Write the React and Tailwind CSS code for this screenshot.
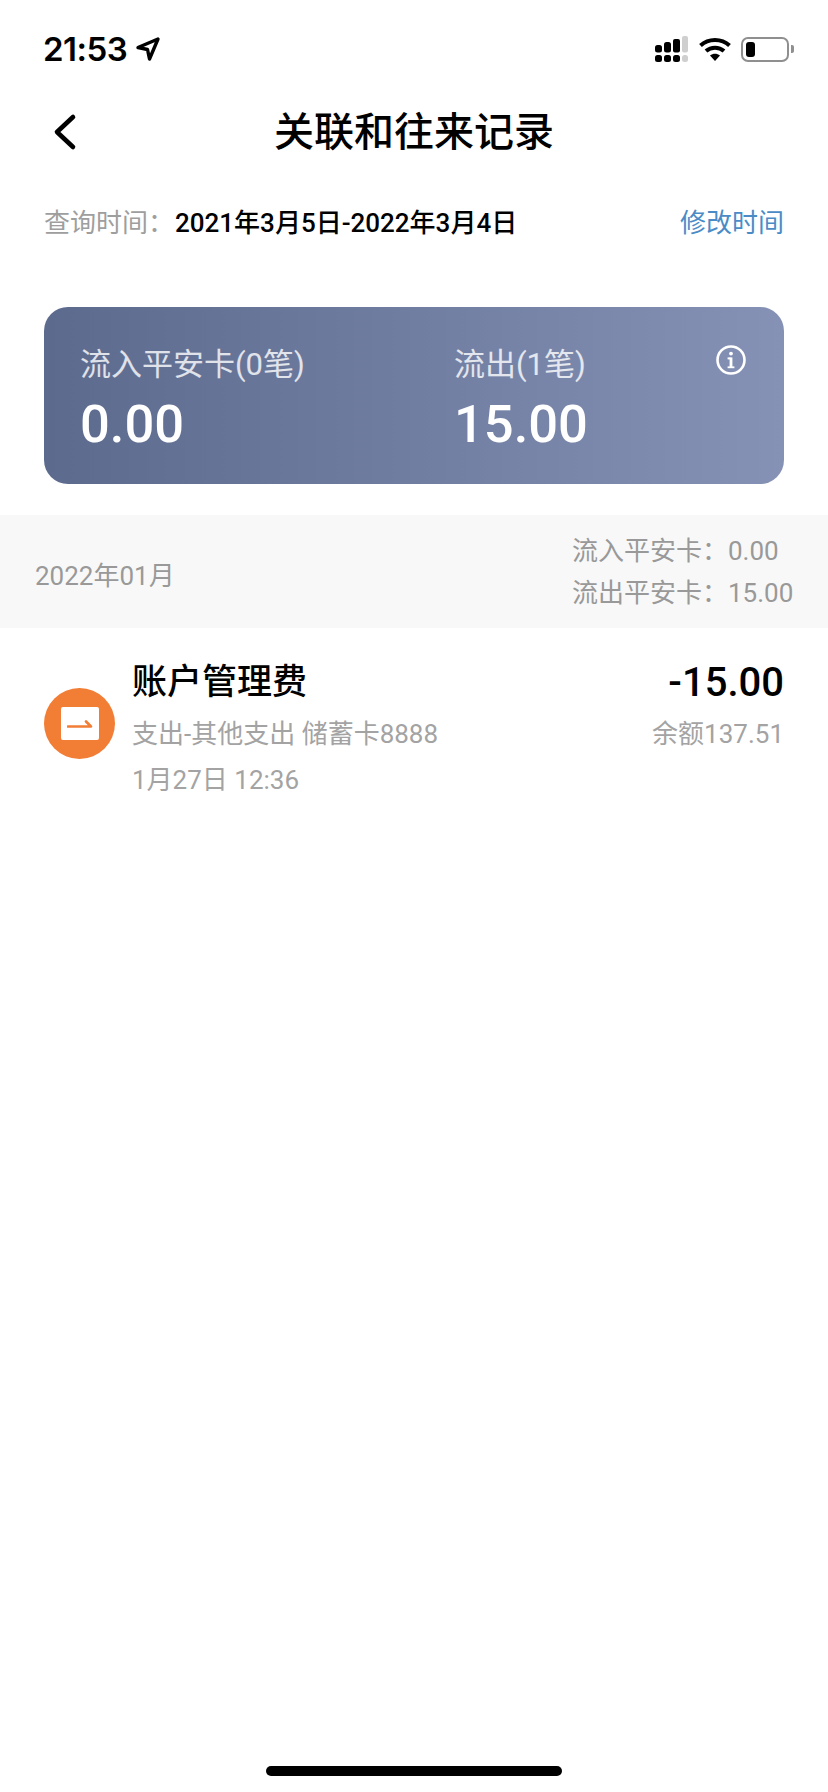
const FONT = "font-['Roboto','Noto_Sans_CJK_SC',sans-serif]";

function StatusIcons() {
  return (
    <div className="flex items-center">
      <svg width="34" height="26" viewBox="0 0 34 26">
        <g fill="#000">
          <rect x="0" y="9" width="7" height="7.5" rx="2.5" />
          <rect x="9" y="6" width="7" height="10.5" rx="2.5" />
          <rect x="18" y="3" width="7" height="13.5" rx="2" />
          <rect x="0" y="19" width="7" height="7" rx="2.5" />
          <rect x="9" y="19" width="7" height="7" rx="2.5" />
          <rect x="18" y="19" width="7" height="7" rx="2.5" />
        </g>
        <g fill="#cfcfcf">
          <rect x="27" y="0" width="6" height="16.5" rx="2" />
          <rect x="27" y="19" width="6" height="7" rx="2.5" />
        </g>
      </svg>
      <svg width="32" height="24" viewBox="0 0 32 24" className="ml-[10px]">
        <g fill="none" stroke="#000" strokeWidth="4">
          <path d="M1.5 8.5 C9.5 1 22.5 1 30.5 8.5" />
          <path d="M7 14 C12 9.5 20 9.5 25 14" />
        </g>
        <path d="M11 18.5 C14 16.2 18 16.2 21 18.5 L16 24 Z" fill="#000" />
      </svg>
      <div className="flex items-center ml-[10px]">
        <div className="w-[48px] h-[25px] rounded-[7px] border-[2px] border-[#8f8f8f] p-[3px] flex">
          <div className="w-[9px] rounded-[3px] bg-black" />
        </div>
        <div className="w-[3px] h-[8px] ml-[2px] rounded-r-[2px] bg-[#8f8f8f]" />
      </div>
    </div>
  );
}

export default function App() {
  return (
    <div className={`${FONT} relative w-[828px] h-[1792px] bg-white overflow-hidden flex flex-col`}>
      {/* status bar */}
      <div className="h-[96px] shrink-0 flex items-start justify-between pl-[43px] pr-[34px] pt-[28px]">
        <div className="flex items-center gap-[8px] h-[42px]">
          <span className="font-['Inter'] text-[33px] leading-[42px] font-semibold tracking-[-0.5px] text-black">21:53</span>
          <svg width="26" height="26" viewBox="0 0 26 26">
            <path d="M23 3 L3 11.5 L12.5 13.5 L14.5 23 Z" fill="none" stroke="#000" strokeWidth="3.4" strokeLinejoin="round" />
          </svg>
        </div>
        <div className="h-[42px] flex items-center">
          <StatusIcons />
        </div>
      </div>

      {/* nav */}
      <div className="relative h-[72px] shrink-0 flex items-center justify-center pt-[1px]">
        <svg className="absolute left-[50px] top-[17px]" width="30" height="38" viewBox="0 0 30 38">
          <path d="M23 4 L7 19 L23 34" fill="none" stroke="#000" strokeWidth="4.6" strokeLinecap="round" strokeLinejoin="round" />
        </svg>
        <span className="text-[40px] leading-[50px] font-medium text-black">关联和往来记录</span>
      </div>

      {/* query row */}
      <div className="mt-[37px] h-[36px] shrink-0 flex items-center justify-between pl-[44px] pr-[44px]">
        <div className="flex items-center text-[26px] leading-[36px]">
          <span className="text-[#9e9e9e] w-[131px]">查询时间：</span>
          <span className="text-black font-medium">2021年3月5日-2022年3月4日</span>
        </div>
        <span className="text-[26px] leading-[36px] text-[#4a8bc6]">修改时间</span>
      </div>

      {/* card */}
      <div className="mt-[66px] mx-[44px] h-[177px] shrink-0 relative rounded-[24px] bg-gradient-to-r from-[#5c6a8e] to-[#8592b6] pl-[36px] pt-[38px] flex">
        <div className="w-[374px] flex flex-col">
          <span className="text-[31px] leading-[40px] text-white/80">流入平安卡(0笔)</span>
          <span className="text-[52.5px] leading-[60px] font-medium text-white mt-[9px]">0.00</span>
        </div>
        <div className="flex flex-col">
          <span className="text-[31px] leading-[40px] text-white/80">流出(1笔)</span>
          <span className="text-[52.5px] leading-[60px] font-medium text-white mt-[9px]">15.00</span>
        </div>
        <svg className="absolute right-[38px] top-[38px]" width="30" height="30" viewBox="0 0 30 30">
          <circle cx="15" cy="15" r="13.5" fill="none" stroke="#fff" strokeWidth="2.6" />
          <circle cx="15" cy="8.6" r="1.9" fill="#fff" />
          <rect x="13.6" y="12.4" width="2.8" height="10.6" fill="#fff" />
          <rect x="11.6" y="12.4" width="3" height="2" fill="#fff" />
          <rect x="11.6" y="21.4" width="6.8" height="1.8" fill="#fff" />
        </svg>
      </div>

      {/* month band */}
      <div className="mt-[31px] h-[113px] shrink-0 bg-[#f8f8f8] flex items-center justify-between pl-[35px] pr-[36px] text-[26px] text-[#999999]">
        <span className="leading-[36px] mt-[9px]">2022年01月</span>
        <div className="flex flex-col leading-[42px] mt-[1px] w-[220px] whitespace-nowrap">
          <span>流入平安卡：0.00</span>
          <span>流出平安卡：15.00</span>
        </div>
      </div>

      {/* transaction */}
      <div className="pl-[44px] pr-[44px] pt-[32px] flex items-start">
        <div className="mt-[28px] w-[71px] h-[71px] shrink-0 rounded-full bg-[#f27d35] flex items-center justify-center">
          <div className="w-[38px] h-[33px] rounded-[2px] bg-white flex items-center justify-center">
            <svg width="26" height="12" viewBox="0 0 26 12">
              <path d="M1 8.5 H24 L19 3.5" fill="none" stroke="#f27d35" strokeWidth="2.6" strokeLinecap="round" strokeLinejoin="round" />
            </svg>
          </div>
        </div>
        <div className="ml-[17px] flex flex-col flex-1">
          <span className="text-[35px] leading-[46px] font-medium text-black">账户管理费</span>
          <span className="text-[26px] leading-[36px] text-[#a3a3a3] mt-[10px]">支出-其他支出 储蓄卡8888</span>
          <span className="text-[26px] leading-[36px] text-[#a3a3a3] mt-[10px]">1月27日 12:36</span>
        </div>
        <div className="flex flex-col items-end">
          <span className="text-[40px] leading-[46px] font-medium text-black">-15.00</span>
          <span className="text-[26px] leading-[36px] text-[#a3a3a3] mt-[10px]">余额137.51</span>
        </div>
      </div>

      {/* home indicator */}
      <div className="absolute left-[266px] top-[1766px] w-[296px] h-[10px] rounded-full bg-black" />
    </div>
  );
}
